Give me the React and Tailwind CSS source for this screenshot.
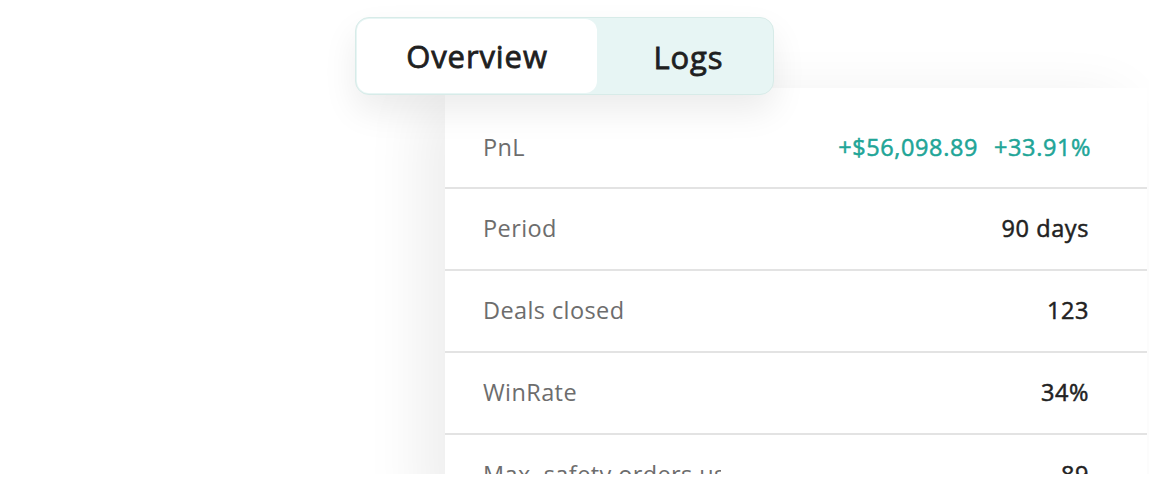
export default function App() {
  const rows = [
    { label: "Period", value: "90 days" },
    { label: "Deals closed", value: "123" },
    { label: "WinRate", value: "34%" },
    { label: "Max. safety orders used", value: "89" },
  ];
  return (
    <div
      className="w-[1149px] h-[479px] bg-white overflow-hidden"
      style={{ fontFamily: '"Open Sans", "Noto Sans", sans-serif' }}
    >
      <div className="relative h-[474px] overflow-hidden bg-white">
        <div className="relative z-10 ml-[355px] mt-[17px] flex h-[78px] w-[419px] rounded-[14px] border-[1.5px] border-[#d7ebe8] bg-[#e7f5f4] p-[1px] shadow-[0_16px_34px_rgba(0,0,0,0.08)]">
          <div className="flex w-[240px] items-center justify-center rounded-[12px] bg-white text-[31px] font-normal tracking-[0.9px] text-[#1f1f1f] [-webkit-text-stroke:0.8px_#1f1f1f]">
            Overview
          </div>
          <div className="flex flex-1 items-center justify-center pl-[8px] pt-[3px] text-[31px] font-normal tracking-[0.9px] text-[#1f1f1f] [-webkit-text-stroke:0.8px_#1f1f1f]">
            Logs
          </div>
        </div>
        <div className="-mt-[7px] ml-[445px] w-[702px] bg-white shadow-[-24px_10px_56px_rgba(0,0,0,0.07)]">
          <div className="flex h-[101px] items-center justify-between border-b-2 border-[#e3e3e3] pl-[38px] pr-[56px] pt-[20px]">
            <span className="text-[23.5px] tracking-[0.4px] text-[#6d6d6d]">PnL</span>
            <span className="flex gap-[16px] text-[23.5px] font-normal tracking-[0.6px] text-[#21a597] [-webkit-text-stroke:0.5px_#21a597]">
              <span>+$56,098.89</span>
              <span>+33.91%</span>
            </span>
          </div>
          {rows.map((r) => (
            <div
              key={r.label}
              className="flex h-[82px] items-center justify-between border-b-2 border-[#e3e3e3] pl-[38px] pr-[58px]"
            >
              <span className="max-w-[238px] overflow-hidden whitespace-nowrap text-[23.5px] tracking-[0.4px] text-[#6d6d6d]">
                {r.label}
              </span>
              <span className="text-[23.5px] font-normal tracking-[0.6px] text-[#222222] [-webkit-text-stroke:0.5px_#222222]">
                {r.value}
              </span>
            </div>
          ))}
        </div>
      </div>
    </div>
  );
}
